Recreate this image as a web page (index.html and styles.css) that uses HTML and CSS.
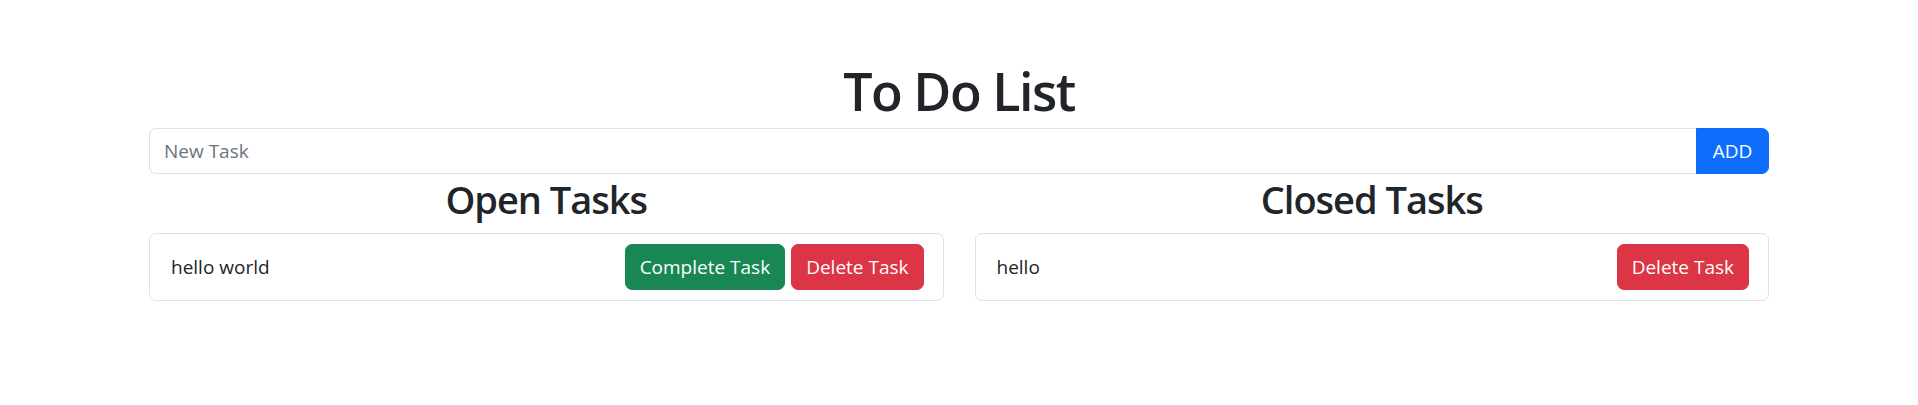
FILE: index.html
```html
<!DOCTYPE html>
<html lang="en">
<head>
<meta charset="utf-8">
<title>To Do List</title>
<link rel="stylesheet" href="styles.css">
</head>
<body>
<div class="container">
  <h1 class="title">To Do List</h1>
  <div class="input-group">
    <input class="task-input" type="text" placeholder="New Task">
    <button class="btn btn-primary add-btn">ADD</button>
  </div>
  <div class="columns">
    <section class="column">
      <h2 class="column-title">Open Tasks</h2>
      <div class="task-card">
        <span class="task-text">hello world</span>
        <div class="task-actions">
          <button class="btn btn-success">Complete Task</button>
          <button class="btn btn-danger">Delete Task</button>
        </div>
      </div>
    </section>
    <section class="column">
      <h2 class="column-title">Closed Tasks</h2>
      <div class="task-card">
        <span class="task-text">hello</span>
        <div class="task-actions">
          <button class="btn btn-danger">Delete Task</button>
        </div>
      </div>
    </section>
  </div>
</div>
</body>
</html>
```
FILE: styles.css
```css
* { box-sizing: border-box; }
html, body { margin: 0; padding: 0; background: #fff; }
body {
  font-family: "Open Sans", "Noto Sans", sans-serif;
  font-size: 19px;
  color: #212529;
}
.container {
  width: 1620px;
  margin: 0 auto;
  padding-top: 61px;
}
.title {
  margin: 0 0 7px;
  text-align: center;
  font-size: 52px;
  font-weight: 600;
  letter-spacing: -1.5px;
  line-height: 60px;
}
.input-group {
  display: flex;
  height: 46px;
}
.task-input {
  flex: 1;
  min-width: 0;
  border: 1px solid #dee2e6;
  border-right: none;
  border-radius: 7px 0 0 7px;
  padding: 0 14px;
  font: inherit;
  color: #212529;
  outline: none;
}
.task-input::placeholder { color: #6c757d; }
.btn {
  border: 1px solid transparent;
  border-radius: 7px;
  padding: 0 14px;
  font: inherit;
  color: #fff;
  height: 46px;
  cursor: pointer;
}
.add-btn {
  width: 73px;
  padding: 0;
  border-radius: 0 7px 7px 0;
}
.btn-primary { background: #0d6efd; border-color: #0d6efd; }
.btn-success { background: #198754; border-color: #198754; }
.btn-danger { background: #dc3545; border-color: #dc3545; }
.columns {
  display: flex;
  gap: 31px;
}
.column { flex: 1; min-width: 0; }
.column-title {
  margin: 2px 0 11px;
  text-align: center;
  font-size: 38px;
  font-weight: 600;
  letter-spacing: -1px;
  line-height: 46px;
}
.task-card {
  display: flex;
  align-items: center;
  justify-content: space-between;
  border: 1px solid #dee2e6;
  border-radius: 7px;
  padding: 10px 19px 10px 21px;
}
.task-actions {
  display: flex;
  gap: 6px;
}
```
